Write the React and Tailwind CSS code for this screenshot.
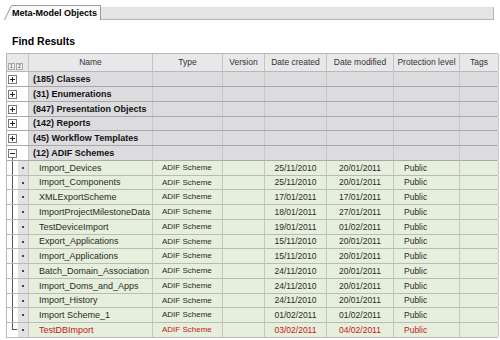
import React from "react";

const groups = [
  "(185) Classes",
  "(31) Enumerations",
  "(847) Presentation Objects",
  "(142) Reports",
  "(45) Workflow Templates",
];

const children = [
  ["Import_Devices", "25/11/2010", "20/01/2011"],
  ["Import_Components", "25/11/2010", "20/01/2011"],
  ["XMLExportScheme", "17/01/2011", "17/01/2011"],
  ["ImportProjectMilestoneData", "18/01/2011", "27/01/2011"],
  ["TestDeviceImport", "19/01/2011", "01/02/2011"],
  ["Export_Applications", "15/11/2010", "20/01/2011"],
  ["Import_Applications", "15/11/2010", "20/01/2011"],
  ["Batch_Domain_Association", "24/11/2010", "20/01/2011"],
  ["Import_Doms_and_Apps", "24/11/2010", "20/01/2011"],
  ["Import_History", "24/11/2010", "20/01/2011"],
  ["Import Scheme_1", "01/02/2011", "01/02/2011"],
  ["TestDBImport", "03/02/2011", "04/02/2011"],
];

const GRID = "grid grid-cols-[22px_124px_70px_42px_62px_67px_66px_39px]";

// row index (0..17) -> height class; every 4th row is 1px shorter
const rowH = (i) => (i % 4 === 3 ? "h-[14px]" : "h-[15px]");

function Box({ sign }) {
  return (
    <div className="w-[9px] h-[9px] border border-[#7a7a7a] bg-white flex items-center justify-center">
      <div className="relative w-[5px] h-[5px] flex items-center justify-center">
        <div className="w-[5px] h-px bg-[#222]" />
        {sign === "+" && <div className="absolute left-[2px] top-0 w-px h-[5px] bg-[#222]" />}
      </div>
    </div>
  );
}

export default function App() {
  return (
    <div className="w-[500px] h-[340px] bg-white overflow-hidden font-['Liberation_Sans',Arial,sans-serif]">
      {/* tab strip */}
      <div className="h-[20px] flex items-end pl-[4px] pr-[6px]">
        <div className="flex items-end h-[15px]">
          <svg width="8" height="15" viewBox="0 0 8 15" className="block">
            <polygon points="0,15 7,0.5 8,0.5 8,15" fill="#fafafa" />
            <line x1="0.5" y1="15" x2="7.5" y2="0.5" stroke="#9a9a9a" strokeWidth="1" />
          </svg>
          <div className="h-[15px] border-t border-r border-[#9a9a9a] bg-[#fafafa] pr-[3px] flex items-center text-[9px] font-bold text-black leading-none">
            Meta-Model Objects
          </div>
        </div>
        <div className="flex-1 h-[13px] bg-[#e4e4e4] border-t border-b border-r border-[#b4b4b4] border-t-[#e0e0e0]" />
      </div>

      <div className="pl-[12px] pt-[16px] text-[10.5px] font-bold text-black leading-none h-[33px]">
        Find Results
      </div>

      {/* table */}
      <div className="ml-[6px] w-[492px] border-l border-[#b8b8b8]">
        {/* header */}
        <div className={`${GRID} h-[19px] bg-[#e8e8ea] border-t border-b border-[#b8b8b8] text-[8.5px] text-[#333] leading-none`}>
          <div className="border-r border-[#c4c4c4] flex items-end pb-[1px] pl-[1px] gap-[1px]">
            <div className="w-[7px] h-[7px] border border-[#a8a8a8] bg-[#f4f4f4] text-[5px] flex items-center justify-center">1</div>
            <div className="w-[7px] h-[7px] border border-[#a8a8a8] bg-[#f4f4f4] text-[5px] flex items-center justify-center">2</div>
          </div>
          {["Name", "Type", "Version", "Date created", "Date modified", "Protection level", "Tags"].map((h) => (
            <div key={h} className="border-r border-[#c4c4c4] flex items-center justify-center whitespace-nowrap overflow-hidden">
              {h}
            </div>
          ))}
        </div>

        {/* group rows */}
        {groups.map((g, gi) => (
          <div key={g} className={`${GRID} ${rowH(gi)} border-b border-[#a9a9ab] text-[9px] leading-none`}>
            <div className="bg-white border-r border-[#c4c4c4] flex items-center pl-[1px]">
              <Box sign="+" />
            </div>
            <div className="bg-[#dcdcdf] border-r border-[#c8c8cc] flex items-center pl-[4px] font-bold text-[#111] whitespace-nowrap">
              {g}
            </div>
            {[0, 1, 2, 3, 4, 5].map((i) => (
              <div key={i} className="bg-[#dcdcdf] border-r border-[#c8c8cc]" />
            ))}
          </div>
        ))}
        <div className={`${GRID} ${rowH(5)} border-b border-[#a9a9ab] text-[9px] leading-none`}>
          <div className="bg-white border-r border-[#c4c4c4] flex flex-col items-start pl-[1px]">
            <div className="h-[3px]" />
            <Box sign="-" />
            <div className="ml-[4px] w-px flex-1 bg-[#555]" />
          </div>
          <div className="bg-[#dcdcdf] border-r border-[#c8c8cc] flex items-center pl-[4px] font-bold text-[#111] whitespace-nowrap">
            (12) ADIF Schemes
          </div>
          {[0, 1, 2, 3, 4, 5].map((i) => (
            <div key={i} className="bg-[#dcdcdf] border-r border-[#c8c8cc]" />
          ))}
        </div>

        {/* child rows */}
        {children.map(([name, c, m], idx) => {
          const last = idx === children.length - 1;
          const color = last ? "text-[#c8141e]" : "text-[#2a2a2a]";
          return (
            <div key={name} className={`${GRID} ${rowH(idx + 6)} border-b border-[#b8bcb4] leading-none`}>
              <div className="bg-white border-r border-[#c4c4c4] flex items-stretch">
                <div className="w-[5px]" />
                {last ? (
                  <div className="w-[5px] h-1/2 border-l border-b border-[#555]" />
                ) : (
                  <div className="w-[5px] border-l border-[#555]" />
                )}
                <div className="w-[1px] bg-white" />
                <div className="flex-1 bg-[#e2e2e2] flex items-center justify-center">
                  <div className="w-[2px] h-[2px] bg-[#444]" />
                </div>
              </div>
              <div className={`bg-[#e6efdb] border-r border-[#c4c8c0] flex items-center pl-[10px] text-[9px] whitespace-nowrap overflow-hidden ${color}`}>
                {name}
              </div>
              <div className={`bg-[#e6efdb] border-r border-[#c4c8c0] flex items-center pl-[9px] text-[8px] whitespace-nowrap ${color}`}>
                ADIF Scheme
              </div>
              <div className="bg-[#e6efdb] border-r border-[#c4c8c0]" />
              <div className={`bg-[#e6efdb] border-r border-[#c4c8c0] flex items-center justify-center text-[8.5px] ${color}`}>
                {c}
              </div>
              <div className={`bg-[#e6efdb] border-r border-[#c4c8c0] flex items-center justify-center text-[8.5px] ${color}`}>
                {m}
              </div>
              <div className={`bg-[#e6efdb] border-r border-[#c4c8c0] flex items-center pl-[10px] text-[8.5px] ${color}`}>
                Public
              </div>
              <div className="bg-[#e6efdb] border-r border-[#c4c8c0]" />
            </div>
          );
        })}
      </div>
    </div>
  );
}
